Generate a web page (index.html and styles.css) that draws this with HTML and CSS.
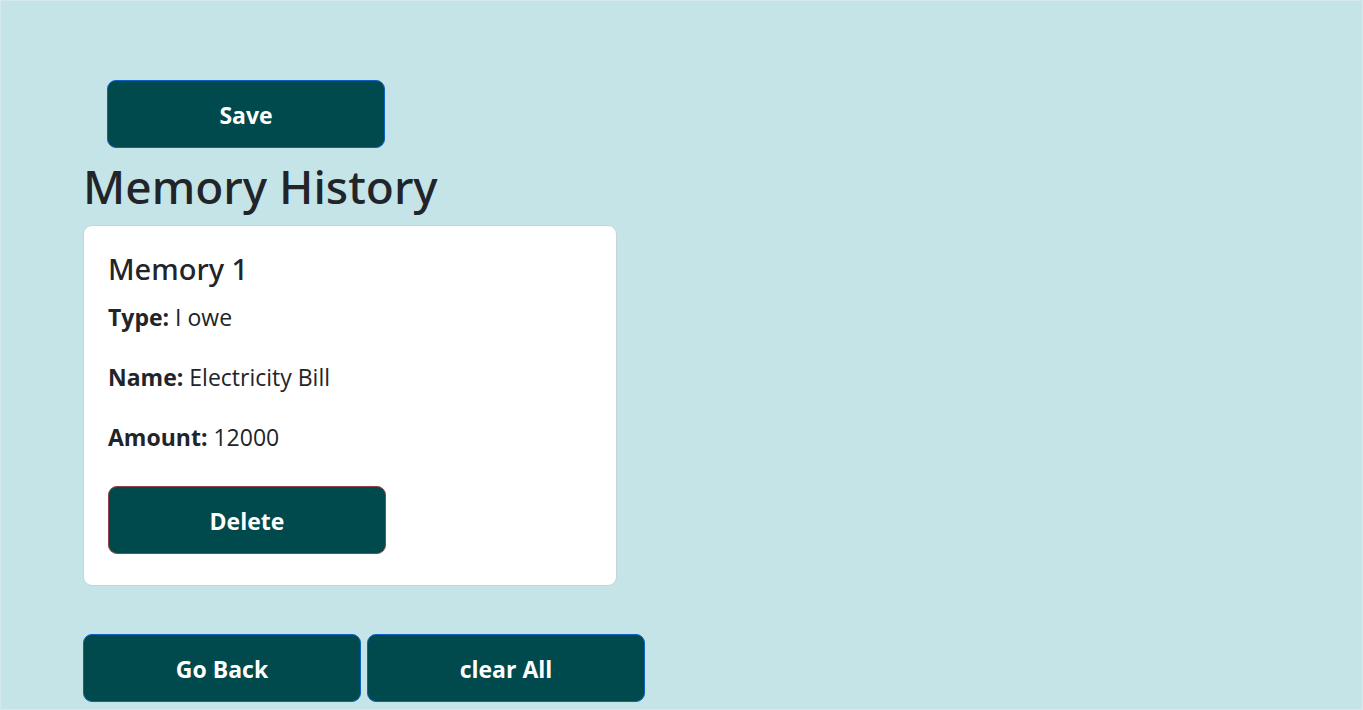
FILE: index.html
```html
<!DOCTYPE html>
<html lang="en">
<head>
<meta charset="utf-8">
<meta name="viewport" content="width=device-width, initial-scale=1">
<title>Memory History</title>
<link rel="stylesheet" href="styles.css">
</head>
<body>
<main class="page">
  <div class="form-actions">
    <button type="submit" class="btn">Save</button>
  </div>
  <h1 class="title">Memory History</h1>
  <article class="card">
    <h2 class="card-title">Memory 1</h2>
    <p class="card-text"><strong>Type:</strong> I owe</p>
    <p class="card-text"><strong>Name:</strong> Electricity Bill</p>
    <p class="card-text"><strong>Amount:</strong> 12000</p>
    <button type="button" class="btn btn-danger">Delete</button>
  </article>
  <div class="actions">
    <button type="button" class="btn">Go Back</button>
    <button type="button" class="btn">clear All</button>
  </div>
</main>
</body>
</html>
```
FILE: styles.css
```css
* {
  box-sizing: border-box;
}

body {
  margin: 0;
  min-height: 100vh;
  border: 1px solid #d3e9ec;
  background: #c5e4e7;
  color: #212529;
  font-family: "Segoe UI", "Open Sans", "Noto Sans", sans-serif;
  font-size: 23px;
  line-height: 36px;
}

.page {
  padding: 79px 82px 7px;
}

.form-actions {
  padding: 0 24px;
}

.btn {
  width: 278px;
  padding: 16px 12px 14px;
  border: 1px solid #0b62c4;
  border-radius: 9px;
  background: #00494d;
  color: #fff;
  font: inherit;
  font-weight: 700;
  cursor: pointer;
}

.btn-danger {
  border-color: #943f4c;
}

.title,
.card-title {
  font-family: "Segoe UI", "Noto Sans", sans-serif;
  font-weight: 500;
}

.title {
  margin: 9px 0 9px;
  font-size: 46px;
  line-height: 59px;
}

.card {
  max-width: 534px;
  padding: 24px 24px 31px;
  border: 1px solid #c3d5d7;
  border-radius: 9px;
  background: #fff;
}

.card-title {
  margin: 0 0 11px;
  font-size: 29px;
  line-height: 38px;
}

.card-text {
  margin: 0 0 24px;
}

.card .btn {
  margin-top: 7px;
}

.actions {
  display: flex;
  flex-wrap: wrap;
  gap: 6px;
  margin-top: 48px;
}
```
